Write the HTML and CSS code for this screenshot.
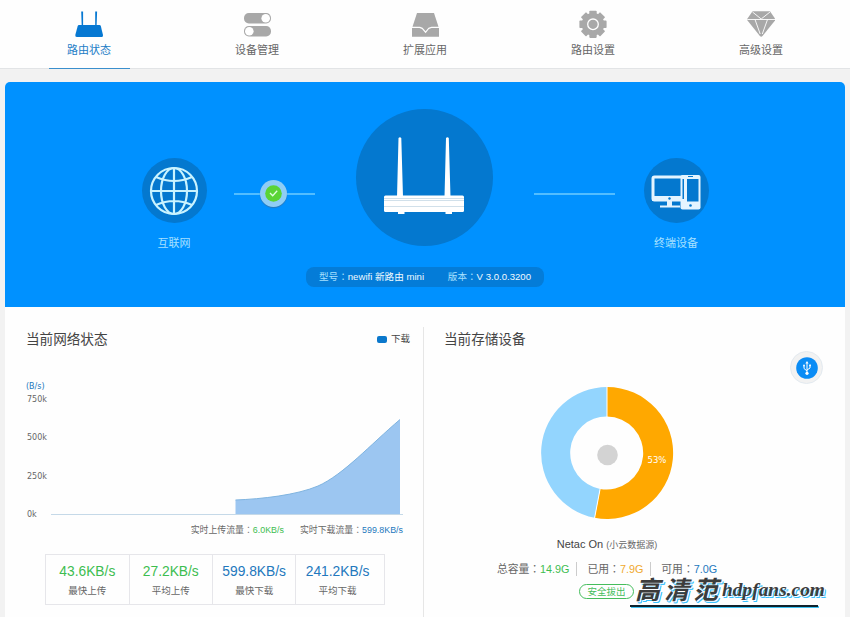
FILE: index.html
```html
<!DOCTYPE html>
<html lang="zh-CN">
<head>
    <meta charset="UTF-8">
    <meta name="viewport" content="width=device-width, initial-scale=1.0">
    <title>newifi 新路由 mini</title>
    <link rel="stylesheet" href="styles.css">
</head>
<body>
    <nav class="nav">
        <a class="nav-item active">
            <svg class="nav-icon" width="30" height="28" viewBox="0 0 30 28">
                <path d="M7.200 1.500h1.900V16H7.700zM21.200 1.500h1.900L22.600 16H21.200z"/>
                <path d="M5 15h20.500q1 0 1.300 1l2.200 9q.3 1.900-1.200 1.900h-25Q1 26.900 1.300 25l2.400-9q.3-1 1.300-1z"/>
            </svg>
            <span>路由状态</span>
        </a>
        <a class="nav-item">
            <svg class="nav-icon" width="30" height="28" viewBox="0 0 30 28">
                <rect x="2" y="3" width="27" height="10.500" rx="4.800"/>
                <rect x="2" y="16" width="27" height="10.500" rx="4.800"/>
                <circle cx="23.700" cy="8.200" r="4.300" fill="#fff"/>
                <circle cx="7.300" cy="21.200" r="4.300" fill="#fff"/>
            </svg>
            <span>设备管理</span>
        </a>
        <a class="nav-item">
            <svg class="nav-icon" width="30" height="28" viewBox="0 0 30 28">
                <path d="M7 3h17l4.500 13.700h-7l-3 1-2.900 3.500-3.100-3.500-2.500-1H2.500z"/>
                <path d="M2 17.900h7.500l2.500 1 3.600 4.300 3.300-4.300 2.600-1H29v8.900H2z"/>
            </svg>
            <span>扩展应用</span>
        </a>
        <a class="nav-item">
            <svg class="nav-icon" width="30" height="28" viewBox="0 0 30 28">
                <circle cx="15" cy="14.300" r="11.300"/>
                <rect x="11.300" y=".7" width="7.400" height="27.200" rx=".8"/>
                <rect x="11.300" y=".7" width="7.400" height="27.200" rx=".8" transform="rotate(45 15 14.300)"/>
                <rect x="11.300" y=".7" width="7.400" height="27.200" rx=".8" transform="rotate(90 15 14.300)"/>
                <rect x="11.300" y=".7" width="7.400" height="27.200" rx=".8" transform="rotate(135 15 14.300)"/>
                <circle cx="15" cy="14.300" r="5.300" fill="none" stroke="#fff" stroke-width="1.300"/>
            </svg>
            <span>路由设置</span>
        </a>
        <a class="nav-item">
            <svg class="nav-icon" width="30" height="28" viewBox="0 0 30 28">
                <path d="M6.500 1.300h17.500L29 8.500v2L16.500 26q-1.300 1.300-2.600 0L1.500 10.500v-2z"/>
                <path d="M1.500 9.500H29M6.500 2l8.700 7 8.800-7M9 9.500l5.200 14.500M21.500 9.500l-5.200 14.500" fill="none" stroke="#fff" stroke-width=".9"/>
            </svg>
            <span>高级设置</span>
        </a>
    </nav>

    <div class="container">
        <div class="hero">
            <div class="topology">
                <div class="node">
                    <div class="circle">
                        <svg width="50" height="50" viewBox="0 0 50 50" fill="none" stroke="#c9f3ff" stroke-width="2.200">
                            <circle cx="25" cy="25" r="23"/>
                            <ellipse cx="25" cy="25" rx="13" ry="23"/>
                            <path d="M25 2v46M2 25h46M7 11q18 8 36 0M7 39q18-8 36 0"/>
                        </svg>
                    </div>
                    <span>互联网</span>
                </div>
                <div class="link link-left">
                    <div class="check">
                        <svg width="17" height="17" viewBox="0 0 17 17">
                            <circle cx="8.500" cy="8.500" r="8.300" fill="#5ad435"/>
                            <path d="M5 8l2.700 2.800L12.200 5.800" fill="none" stroke="#e0ffe0" stroke-width="1.300"/>
                        </svg>
                    </div>
                </div>
                <div class="circle circle-big">
                    <svg width="82" height="78" viewBox="0 0 82 78" fill="#fff">
                        <path d="M15.500 1q1.500-1.500 2.800 0L20 60h-6zM63 1q1.500-1.500 2.800 0L67.500 60h-6z"/>
                        <rect x="1" y="58.500" width="80" height="16.500" rx="1.500"/>
                        <path d="M15 74h6.500v3H15zM62.500 74H69v3h-6.500z"/>
                        <path d="M1 61.500h80M1 63.500h80M1 69.500h80" stroke="#c5d8e4" stroke-width=".8"/>
                    </svg>
                </div>
                <div class="link link-right"></div>
                <div class="node">
                    <div class="circle devices">
                        <svg width="50" height="36" viewBox="0 0 50 36">
                            <rect x="2" y="3" width="33" height="23" rx="1.500" fill="none" stroke="#e4f4ff" stroke-width="3"/>
                            <path d="M1 22h34v5H1zM16 27h5v4.500h8v2H9v-2h7z" fill="#e4f4ff"/>
                            <circle cx="18.500" cy="24.500" r="1.200" fill="#0478cf"/>
                            <rect x="29.500" y="1" width="20" height="34.500" rx="2" fill="#e4f4ff"/>
                            <path d="M31.500 5h1.500v20h-1.500zM36 5h11.500v22.500H36z" fill="#0478cf"/>
                            <circle cx="39.500" cy="31.500" r="1.300" fill="#0478cf"/>
                            <path d="M37 2.500h5" stroke="#0478cf"/>
                        </svg>
                    </div>
                    <span>终端设备</span>
                </div>
            </div>
            <div class="version">
                <span>型号<i class="colon" lang="zh-TW">：</i><b>newifi 新路由 mini</b></span>
                <span>版本<i class="colon" lang="zh-TW">：</i><b>V 3.0.0.3200</b></span>
            </div>
        </div>

        <div class="panels">
            <section class="panel network">
                <div class="panel-head">
                    <h2>当前网络状态</h2>
                    <span class="legend"><i></i>下载</span>
                </div>
                <svg class="chart" width="418" height="150" viewBox="0 0 418 150">
                    <text x="21" y="19" class="unit">(B/s)</text>
                    <text x="22" y="32">750k</text>
                    <text x="22" y="70">500k</text>
                    <text x="22" y="109">250k</text>
                    <text x="22" y="147">0k</text>
                    <path d="M46 144.500H398" stroke="#c5d9e8"/>
                    <path d="M230.500 144V130C257 129 292 125 313 116C338 105 365 75 395 49.500V144z" fill="#9cc6f1"/>
                    <path d="M230.500 130C257 129 292 125 313 116C338 105 365 75 395 49.500" fill="none" stroke="#7fb4e0"/>
                </svg>
                <div class="realtime">
                    <span>实时上传流量<i class="colon" lang="zh-TW">：</i><em class="green">6.0KB/s</em></span>
                    <span>实时下载流量<i class="colon" lang="zh-TW">：</i><em class="blue">599.8KB/s</em></span>
                </div>
                <div class="stats">
                    <div class="stat"><strong class="green">43.6KB/s</strong><span>最快上传</span></div>
                    <div class="stat"><strong class="green">27.2KB/s</strong><span>平均上传</span></div>
                    <div class="stat"><strong class="blue">599.8KB/s</strong><span>最快下载</span></div>
                    <div class="stat"><strong class="blue">241.2KB/s</strong><span>平均下载</span></div>
                </div>
            </section>

            <section class="panel storage">
                <div class="panel-head">
                    <h2>当前存储设备</h2>
                </div>
                <div class="usb">
                    <svg width="22" height="22" viewBox="0 0 22 22">
                        <circle cx="11" cy="11" r="10.800" fill="#0a8cf5"/>
                        <path d="M11 6v10M8 8.500v3l3 2.500M14 8v3l-3 2" fill="none" stroke="#fff"/>
                        <path d="M11 4l1.600 2.600H9.400z" fill="#fff"/>
                        <circle cx="11" cy="16.300" r="1.600" fill="#fff"/>
                        <circle cx="8" cy="8.500" r=".9" fill="#fff"/>
                        <path d="M13.200 7.500h1.700v1.700h-1.700z" fill="#fff"/>
                    </svg>
                </div>
                <svg class="donut" width="134" height="134" viewBox="-67 -67 134 134">
                    <path d="M0-66A66 66 0 1 1-12.400 64.800L-6.900 35.900A36.500 36.500 0 1 0 0-36.500z" fill="#ffa800"/>
                    <path d="M0-66A66 66 0 0 0-12.400 64.800L-6.900 35.900A36.500 36.500 0 0 1 0-36.500z" fill="#93d5fe"/>
                    <path d="M0-67V-36M-12.600 66L-6.800 35.500" stroke="#fff"/>
                    <circle cx=".5" cy="2" r="10.300" fill="#d3d3d3"/>
                    <text x="50" y="9.500" text-anchor="middle">53%</text>
                </svg>
                <div class="disk-name">Netac On <small>(小云数据源)</small></div>
                <div class="capacity">
                    <span>总容量<i class="colon" lang="zh-TW">：</i><em class="green">14.9G</em></span>
                    <span>已用<i class="colon" lang="zh-TW">：</i><em class="orange">7.9G</em></span>
                    <span>可用<i class="colon" lang="zh-TW">：</i><em class="blue">7.0G</em></span>
                </div>
                <a class="eject">安全拔出</a>
            </section>
        </div>
    </div>

    <div class="watermark">
        <span class="wm-cn">高清范</span><span class="wm-en">hdpfans.com</span>
    </div>
</body>
</html>
```
FILE: styles.css
```css
* {
    box-sizing: border-box;
}
body {
    margin: 0;
    height: 617px;
    overflow: hidden;
    position: relative;
    background: #f2f2f2;
    color: #666;
    font-family: "Liberation Sans", "Noto Sans CJK SC", sans-serif;
    font-size: 11px;
}
svg {
    display: block;
}
em, i {
    font-style: normal;
}
/* 冒号居中显示 */
.colon {
    font-family: "Noto Sans CJK TC", sans-serif;
    line-height: 1;
}
.green {
    color: #3dbd50;
}
.blue {
    color: #2378bd;
}
.orange {
    color: #f0a92e;
}

/* 顶部导航 */
.nav {
    display: flex;
    justify-content: center;
    height: 69px;
    background: #fefefe;
    border-bottom: 1px solid #e2e4e6;
}
.nav-item {
    width: 81px;
    height: 69px;
    margin: 0 43.5px;
    padding-top: 10px;
    display: flex;
    flex-direction: column;
    align-items: center;
    line-height: 16px;
}
.nav-icon {
    fill: #a8a8a8;
    margin-bottom: 4px;
}
.nav-item.active {
    color: #1b7cc6;
    border-bottom: 1px solid #3a8fcd;
}
.active .nav-icon {
    fill: #0678d2;
}

.container {
    margin: 13px 5px 0;
    background: #fefefe;
    border-radius: 5px 5px 0 0;
}

/* 网络拓扑 */
.hero {
    height: 225px;
    padding-top: 27px;
    background: #0091ff;
    border-radius: 5px 5px 0 0;
    color: #a6e0ff;
}
.topology {
    display: flex;
    justify-content: center;
    height: 137px;
}
.node {
    width: 65px;
    padding-top: 49px;
    text-align: center;
}
.node span {
    display: block;
    margin-top: 12px;
    line-height: 16px;
}
.circle {
    width: 65px;
    height: 65px;
    border-radius: 50%;
    background: #0478cf;
    display: flex;
    align-items: center;
    justify-content: center;
}
.circle-big {
    width: 137px;
    height: 137px;
    padding-bottom: 4px;
}
.devices {
    padding-top: 3px;
}
.link {
    width: 81px;
    height: 2px;
    margin: 84px 41px 0 27px;
    background: #52bdff;
    display: flex;
    align-items: center;
    justify-content: center;
}
.link-right {
    margin: 84px 29px 0 41px;
}
.check {
    flex: none;
    width: 27px;
    height: 27px;
    margin: 0 1px 1px 0;
    padding: 5px;
    border-radius: 50%;
    background: #8fcdf5;
    box-shadow: 0 1px 1px #2a78b8;
}
.version {
    width: 238px;
    height: 20px;
    margin: 21px auto 0;
    padding: 0 13px;
    display: flex;
    justify-content: space-between;
    border-radius: 8px;
    background: #047cd8;
    font-size: 9.6px;
    line-height: 20px;
    white-space: nowrap;
}
.version b {
    color: #f0faff;
    font-weight: normal;
}

/* 下方两栏 */
.panels {
    display: flex;
    padding-top: 20px;
    height: 310px;
}
.panel {
    width: 419px;
}
.network {
    border-right: 1px solid #e6e6e6;
}
.storage {
    width: 421px;
    display: flex;
    flex-direction: column;
    align-items: center;
}
.panel-head {
    display: flex;
    justify-content: space-between;
    width: 100%;
    height: 24px;
    padding: 0 13px 0 21px;
    line-height: 26px;
    color: #444;
}
.storage .panel-head {
    padding-left: 20px;
}
h2 {
    margin: 0;
    font-size: 13.6px;
    font-weight: normal;
}
.legend {
    display: flex;
    align-items: center;
    gap: 4px;
    font-size: 9.5px;
}
.legend i {
    width: 10px;
    height: 7px;
    border-radius: 2px;
    background: #0b78cc;
}
.chart {
    margin-top: 19px;
    font-family: "DejaVu Sans", sans-serif;
    font-size: 8px;
    fill: #666;
}
.chart .unit {
    fill: #2378bd;
}
.realtime {
    display: flex;
    justify-content: flex-end;
    gap: 16px;
    padding-right: 20px;
    margin-top: 2px;
    font-size: 8.9px;
    line-height: 16px;
}
.stats {
    display: flex;
    width: 340px;
    height: 51px;
    margin: 16px 0 0 40px;
    border: 1px solid #e6e6ea;
}
.stat {
    width: 83.4px;
    padding-top: 9px;
    text-align: center;
}
.stat:first-child {
    width: 82.6px;
}
.stat + .stat {
    border-left: 1px solid #e6e6ea;
}
.stat strong, .stat span {
    display: block;
    line-height: 16px;
}
.stat strong {
    font-size: 13.8px;
    font-weight: normal;
}
.stat span {
    margin-top: 3px;
    font-size: 9.5px;
}

/* 存储设备 */
.usb {
    align-self: flex-end;
    width: 33px;
    height: 33px;
    margin: 0 22px 0 0;
    padding: 5px;
    border: 1px solid #e3eaf0;
    border-radius: 50%;
    background: #f2f2f2;
}
.donut {
    margin: 2px 0 0 -55px;
}
.donut text {
    font-family: "DejaVu Sans", sans-serif;
    font-size: 8.5px;
    fill: #fff;
}
.disk-name {
    margin: 16px 0 0 -55px;
    font-size: 11px;
    line-height: 16px;
    color: #444;
}
.disk-name small {
    font-size: 9px;
    color: #666;
}
.capacity {
    display: flex;
    margin: 9px 0 0 -55px;
    font-size: 10.8px;
    line-height: 14px;
}
.capacity span + span {
    margin-left: 7px;
    padding-left: 10px;
    border-left: 1px solid #ccc;
}
.eject {
    width: 55px;
    height: 15px;
    margin: 8px 0 0 -56px;
    border: 1px solid #45bd5c;
    border-radius: 8px;
    color: #45bd5c;
    font-size: 9.5px;
    line-height: 14px;
    text-align: center;
}

/* 水印 */
.watermark {
    position: absolute;
    left: 630px;
    top: 577px;
    width: 188px;
    height: 31px;
    padding-left: 5px;
    display: flex;
    color: #3c3c3c;
    font-style: italic;
    font-weight: bold;
    line-height: 26px;
    white-space: nowrap;
    text-shadow: 1px 1px 0 #fff, 2px 2px 0 #36c0ff, 1px 2px 0 #36c0ff;
}
.watermark::after {
    content: "";
    position: absolute;
    left: 0;
    bottom: 1px;
    width: 188px;
    height: 2px;
    background: #10222c;
    box-shadow: 1px 1px 0 #3fc4f5;
}
.wm-cn {
    font-size: 25px;
    letter-spacing: 4px;
}
.wm-en {
    font-family: "Liberation Serif", serif;
    font-size: 19.4px;
}
```
